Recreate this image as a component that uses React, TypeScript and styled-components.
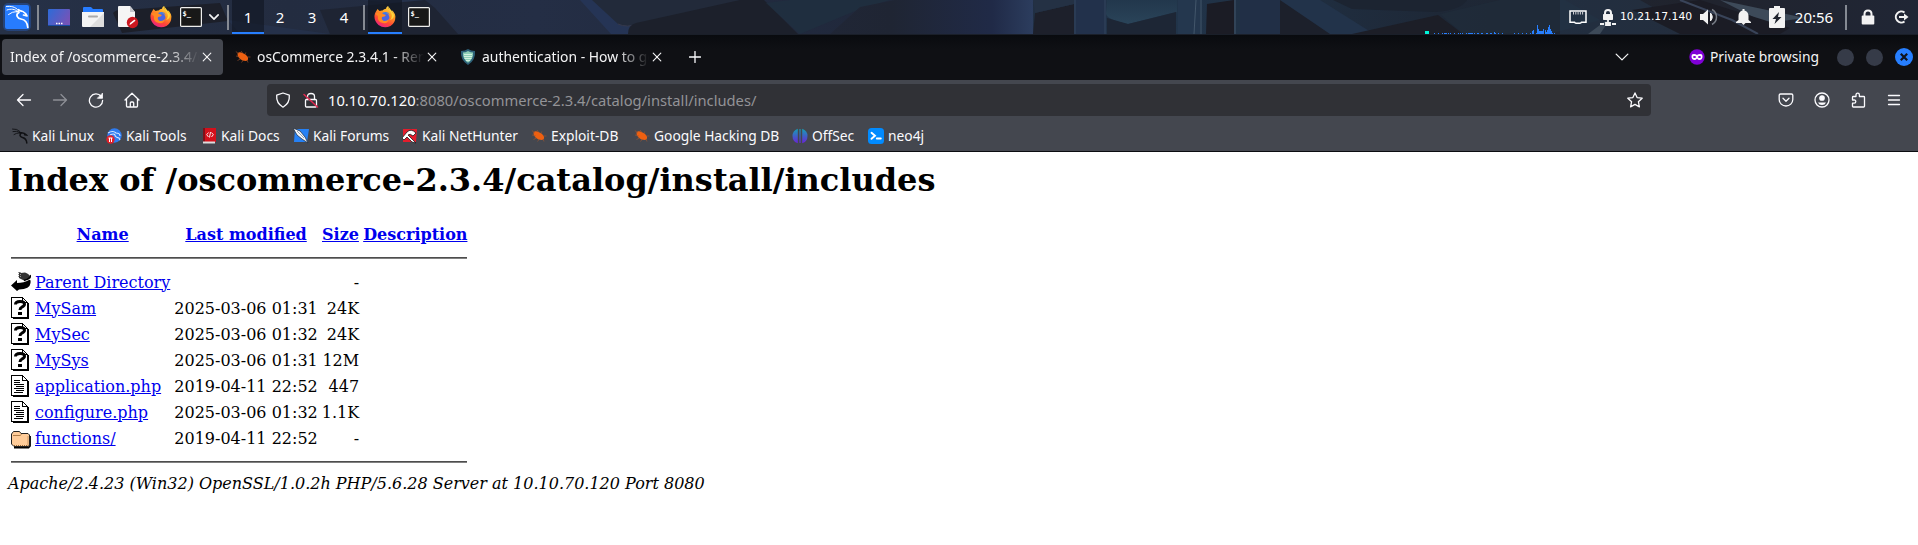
import React from 'react';
import styled, { createGlobalStyle, css } from 'styled-components';

const Global = createGlobalStyle`
  html, body { margin: 0; padding: 0; background: #fff; }
  *, *::before, *::after { box-sizing: border-box; }
  svg { display: block; flex: none; }
`;

const ui = '"Noto Sans", "Open Sans", sans-serif';

const Screen = styled.div`
  width: 1918px;
  height: 545px;
  overflow: hidden;
  display: flex;
  flex-direction: column;
  background: #fff;
`;

/* ---------- desktop panel ---------- */
const Panel = styled.header`
  position: relative;
  height: 35px;
  flex: none;
  background: #20283a;
  border-bottom: 1px solid #1a1f29;
  font-family: ${ui};
  color: #fff;
`;
const Wallpaper = styled.svg`
  position: absolute;
  inset: 0;
`;
const PanelItems = styled.div`
  position: relative;
  display: flex;
  align-items: center;
  height: 34px;
`;
const Slot = styled.div<{ $w: number; $active?: boolean }>`
  width: ${p => p.$w}px;
  height: 34px;
  flex: none;
  display: flex;
  align-items: center;
  justify-content: center;
  font-size: 15px;
  line-height: 34px;
  white-space: nowrap;
  ${p => p.$active && css`background: rgba(17, 23, 35, 0.65); box-shadow: inset 0 -2px 0 #277fff;`}
`;
const Gap = styled.div<{ $w: number }>`
  width: ${p => p.$w}px;
  flex: none;
`;
const Divider = styled.div`
  width: 2px;
  height: 25px;
  flex: none;
  background: #858a93;
`;
const Spacer = styled.div`
  flex: 1;
`;
const Graph = styled.svg`
  align-self: flex-end;
`;
const Address = styled.span`
  width: 80px;
  font-size: 10.8px;
  font-family: "DejaVu Sans", sans-serif;
  line-height: 32px;
  white-space: nowrap;
`;

/* ---------- browser tabs ---------- */
const TabStrip = styled.div`
  height: 45px;
  flex: none;
  display: flex;
  align-items: center;
  padding: 0 5px 1px 2px;
  background: linear-gradient(#090b0f, #0f1014 14px);
  color: #f4f4f5;
  font-family: ${ui};
`;
const Tab = styled.div<{ $active?: boolean; $w: number }>`
  display: flex;
  align-items: center;
  width: ${p => p.$w}px;
  height: 36px;
  padding: 0 8px 0 8px;
  border-radius: 4px;
  background: ${p => (p.$active ? '#44474f' : 'transparent')};
`;
const Favicon = styled.span`
  padding: 0 6px 0 4px;
`;
const Title = styled.span`
  flex: 1;
  overflow: hidden;
  white-space: nowrap;
  font-size: 13.9px;
  line-height: 34px;
  mask-image: linear-gradient(to left, transparent, #000 32px);
`;
const NewTab = styled.div`
  width: 44px;
  display: flex;
  justify-content: center;
`;
const Private = styled.div`
  display: flex;
  align-items: center;
  gap: 5px;
  margin: 0 18px 0 60px;
  font-size: 13.85px;
  line-height: 34px;
  white-space: nowrap;
`;
const WindowButtons = styled.div`
  display: flex;
  align-items: center;
  gap: 12px;
`;
const Dot = styled.i`
  width: 17px;
  height: 17px;
  border-radius: 50%;
  background: #363b48;
`;

/* ---------- navigation ---------- */
const NavBar = styled.div`
  display: flex;
  height: 36px;
  flex: none;
  padding-top: 4px;
  background: #44474f;
  color: #fbfbfe;
  font-family: ${ui};
`;
const NavButton = styled.div<{ $dim?: boolean }>`
  width: 36px;
  height: 32px;
  display: flex;
  align-items: center;
  justify-content: center;
  opacity: ${p => (p.$dim ? 0.4 : 1)};
`;
const NavGroup = styled.div<{ $left: number }>`
  display: flex;
  margin-left: ${p => p.$left}px;
`;
const UrlField = styled.div`
  display: flex;
  align-items: center;
  width: 1384px;
  height: 32px;
  margin-left: 117px;
  padding: 0 8px;
  border-radius: 4px;
  background: #303136;
`;
const Url = styled.span`
  flex: 1;
  margin-left: 9px;
  font-size: 14.72px;
  line-height: 32px;
  color: #939397;
  b { font-weight: 400; color: #fbfbfe; }
`;
const Bookmarks = styled.div`
  display: flex;
  height: 36px;
  flex: none;
  padding: 5px 0 0 12px;
  align-items: center;
  background: #44474f;
  border-bottom: 1px solid #0b0c10;
  color: #fbfbfe;
  font-family: ${ui};
`;
const Bookmark = styled.div<{ $w: number }>`
  display: flex;
  align-items: center;
  width: ${p => p.$w}px;
  flex: none;
  gap: 4px;
  font-size: 13.8px;
  line-height: 28px;
  white-space: nowrap;
`;

/* ---------- directory listing ---------- */
const Page = styled.main`
  padding: 10px 8px 0;
  font-family: "DejaVu Serif", serif;
  font-size: 16px;
  color: #000;
`;
const Heading = styled.h1`
  margin: 0 0 21px;
  font-size: 32px;
  line-height: 37px;
  font-weight: 700;
`;
const Listing = styled.table`
  border-spacing: 2px;
  line-height: 19px;
  td, th { padding: 1px; white-space: nowrap; height: 24px; }
`;
const IconCell = styled.td`
  width: 22px;
  vertical-align: top;
`;
const Right = styled.td`
  text-align: right;
`;
const RuleCell = styled.td`
  && { height: 20px; line-height: 0; }
`;
const Rule = styled.hr`
  margin: 8px 0;
  height: 2px;
  border: 0;
  border-top: 1px solid #4d4d4d;
  border-bottom: 1px solid #808080;
`;
const Link = styled.a`
  color: #0000ee;
  text-decoration: underline;
`;
const Signature = styled.address`
  line-height: 19px;
  font-style: italic;
  white-space: nowrap;
`;

/* ---------- drawings ---------- */
const KaliMenu = () => (
  <svg width="34" height="34" viewBox="0 0 34 34">
    <rect x="3" y="3" width="28" height="28" rx="5" fill="#2777ff" opacity=".28" />
    <rect x="5" y="5" width="24" height="24" rx="2" fill="#277cff" />
    <g transform="translate(5 4)" fill="none" stroke="#fff" strokeLinecap="round" strokeLinejoin="round">
      <path d="M1.500 2.500C6 2 10 2.500 13.500 6.500M2 6C6 4.500 10 5 12.500 7.500M3.500 10.500Q7 7.500 12 7.500" strokeWidth="1" />
      <path d="M12 7.500C15 6 18.500 7.500 20.500 9.500L22 12L18.500 11M14 8.500C10 10.500 12.500 14.500 16 15C20.500 15.800 22.500 18 22.800 23.500" strokeWidth="1.700" />
      <path d="M13.500 5.500L17 7.500" strokeWidth="1.300" />
    </g>
  </svg>
);
const Desktop = () => (
  <svg width="22" height="17" viewBox="0 0 22 17">
    <defs><linearGradient id="dk" x2="1" y2=".5"><stop stopColor="#2c6bd8" /><stop offset="1" stopColor="#7454b8" /></linearGradient></defs>
    <rect width="22" height="17" rx="1" fill="url(#dk)" />
    <path d="M0 16.500h22" stroke="#174aa0" />
    <path d="M8 14.500h1.500m1 0h1.500m1 0h1.500" stroke="#fff" strokeWidth="1.500" />
  </svg>
);
const Files = () => (
  <svg width="22" height="20" viewBox="0 0 22 20">
    <path d="M1 1q0-1 1-1h7l2 2h9q1 0 1 1v4H1z" fill="#277cff" />
    <path d="M0 5h22v14q0 1-1 1H1q-1 0-1-1z" fill="#f4f4f4" />
    <path d="M22 6v13q0 1-1 1H8z" fill="#dedede" />
    <path d="M7 9.500h8" stroke="#aaa" strokeWidth="2" strokeLinecap="round" />
  </svg>
);
const TextEditor = () => (
  <svg width="22" height="24" viewBox="0 0 22 24">
    <path d="M2 1h11l5 6v14q0 1-1 1H2q-1 0-1-1V2q0-1 1-1z" fill="#f5f5f5" />
    <path d="M13 1l5 6h-5z" fill="#c4c6cc" />
    <circle cx="15.500" cy="17.500" r="5.700" fill="#cc1820" />
    <path d="M12.500 20l.5-2 4.500-3.500 1 1.200-4.500 3.500z" fill="#fff" />
  </svg>
);
const Firefox = ({ id }: { id: string }) => (
  <svg width="22" height="22" viewBox="0 0 22 22">
    <defs>
      <linearGradient id={id} x1=".8" y1="0" x2=".3" y2="1"><stop stopColor="#ffe14a" /><stop offset=".38" stopColor="#ff9a22" /><stop offset=".72" stopColor="#ff4735" /><stop offset="1" stopColor="#e9208b" /></linearGradient>
    </defs>
    <path d="M3.500 3l2 2q1.500-.7 3-.5Q10 3 12 2.800Q12 1 14 0Q14 3 17 5l1.500 2q-.5-2-1-3Q21 6.500 21.400 10.500Q21.500 17 16.500 20Q10 23 4.500 19Q0 15 .5 9.500Q.8 7 2 5.500Q2.800 4 3.500 3z" fill={`url(#${id})`} />
    <circle cx="10.800" cy="11.500" r="4.600" fill="#4a66e4" />
    <path d="M8 7Q14 4.500 16 9Q13 6.500 11 8.500z" fill="#397bf0" />
    <path d="M1.500 8Q4 5.500 9 8l3 1q-1 2-4 2Q7 13 9 14.500Q12 16 15 13Q14 18 9 17Q3 16 4 10z" fill="#ff8a22" />
    <path d="M14 0Q14 3 17 6.500Q19 11 16 14Q20 13 20 9Q18 5 14 0z" fill="#ffd43b" />
  </svg>
);
const TermText = styled.text`
  font: bold 7px "DejaVu Sans Mono", monospace;
  fill: #fff;
`;
const Terminal = () => (
  <svg width="22" height="20" viewBox="0 0 22 20">
    <rect x=".6" y=".6" width="20.800" height="18.800" rx="1" fill="#181818" stroke="#eeeeec" strokeWidth="1.200" />
    <TermText x="2.500" y="9">$_</TermText>
  </svg>
);
const ChevronDown = ({ w = 12, s = 1.4 }: { w?: number; s?: number }) => (
  <svg width={w} height={w} viewBox="0 0 12 12"><path d="M1 3.500L6 8.500L11 3.500" fill="none" stroke="#f4f4f5" strokeWidth={s} strokeLinecap="round" strokeLinejoin="round" /></svg>
);
const Ethernet = () => (
  <svg width="18" height="14" viewBox="0 0 18 14">
    <path d="M1 1h16v11.200h-4.500q-.5 1-1.500 1H7q-1 0-1.500-1H1z" fill="none" stroke="#fff" strokeWidth="1.500" />
    <path d="M4.500 2v2.500m2.300-2.500v2.500m2.300-2.500v2.500m2.300-2.500v2.500m2.200-2.500v2.500" stroke="#d0d0d4" />
  </svg>
);
const VpnLock = () => (
  <svg width="16" height="17" viewBox="0 0 16 17">
    <path d="M5 6V4q0-3 3-3t3 3v2" fill="none" stroke="#f2f2f2" strokeWidth="2" />
    <rect x="3" y="5" width="10" height="6" rx=".7" fill="#f2f2f2" />
    <path d="M8 11v2M6 14h4v2H6zM0 15h4m8 0h4" stroke="#f2f2f2" strokeWidth="1.800" fill="#f2f2f2" />
  </svg>
);
const Speaker = () => (
  <svg width="18" height="18" viewBox="0 0 18 18">
    <path d="M0 6h3l5-4.500v15L3 12H0z" fill="#f2f2f2" />
    <path d="M10.500 5q3.500 4 0 8z" fill="#f2f2f2" stroke="#f2f2f2" />
    <path d="M12 1.500Q16.500 4 16.500 9t-4.500 7.500" fill="none" stroke="#777c86" strokeWidth="1.500" />
  </svg>
);
const Bell = () => (
  <svg width="15" height="16" viewBox="0 0 15 16"><path d="M6.500 0h2v1.500Q12.500 2.500 12.500 7v4L15 13v1H0v-1l2.500-2V7q0-4.500 4-5.500zM5.500 14h4l-2 2z" fill="#f2f2f2" /></svg>
);
const Battery = () => (
  <svg width="16" height="22" viewBox="0 0 16 22"><path d="M5 0h6v2h4q1 0 1 1v18q0 1-1 1H1q-1 0-1-1V3q0-1 1-1h4z" fill="#f2f2f2" /><path d="M10 6L3.500 13H7l-1.500 5L12.500 11H9z" fill="#20242e" /></svg>
);
const Padlock = () => (
  <svg width="14" height="16" viewBox="0 0 14 16"><path d="M3.500 7V5q0-3.500 3.500-3.500T10.500 5v2" fill="none" stroke="#f2f2f2" strokeWidth="2" /><rect x=".7" y="6.500" width="12.600" height="9" rx="1" fill="#f2f2f2" /></svg>
);
const Logout = () => (
  <svg width="15" height="14" viewBox="0 0 15 14"><path d="M10.500 2.500A5.500 5.500 0 1 0 10.500 11.500M5 7h6" fill="none" stroke="#f2f2f2" strokeWidth="2" /><path d="M10 3.500L14.500 7L10 10.500z" fill="#f2f2f2" /></svg>
);
const Cross = () => (
  <svg width="16" height="16" viewBox="0 0 16 16"><path d="M4.200 4.200l7.600 7.600m0-7.600l-7.600 7.600" stroke="#f4f4f5" strokeWidth="1.150" strokeLinecap="round" /></svg>
);
const Plus = () => (
  <svg width="12" height="12" viewBox="0 0 12 12"><path d="M6 .5v11M.5 6h11" stroke="#fbfbfe" strokeWidth="1.300" strokeLinecap="round" /></svg>
);
const Bug = () => (
  <svg width="16" height="16" viewBox="0 0 16 16">
    <path d="M2.500 4.500Q4 2.500 7.500 4Q11.500 5.200 13 8.500Q13.500 11.500 11 12Q7 12 4.500 9.500Q2 7 2.500 4.500z" fill="#ee6011" />
    <path d="M.8 2.500L4 5M6 2l2 2.500M1 7l4 1M2.500 11.500l3-1.500M6.500 13.500l1.500-2M10 5l.8-1.500M12 8h3.500M12 11l1 2.500" stroke="#a8562c" strokeWidth=".6" fill="none" />
  </svg>
);
const Shield = () => (
  <svg width="16" height="16" viewBox="0 0 16 16">
    <path d="M8 0Q11 2 15 2Q16 11 8 16Q0 11 1 2Q5 2 8 0z" fill="#2d6078" />
    <path d="M8 2Q10.500 3.500 13 3.500Q13.500 10 8 13.800Q2.500 10 3 3.500Q5.500 3.500 8 2z" fill="#8fd0b8" />
    <path d="M4 5.500h8M4 7.500h8M4.500 9.500h7M6 11.500h4" stroke="#d9f4e3" strokeWidth=".9" />
  </svg>
);
const Mask = () => (
  <svg width="16" height="16" viewBox="0 0 16 16"><circle cx="8" cy="8" r="7.700" fill="#8000d7" /><path d="M8 6Q10 4.500 12.500 5.200Q13.500 5.500 13.500 8Q13 11 10.500 11Q9 11 8 9.500Q7 11 5.500 11Q3 11 2.500 8Q2.500 5.500 3.500 5.200Q6 4.500 8 6z" fill="#fff" /><ellipse cx="5.500" cy="8" rx="1.500" ry="1" fill="#8000d7" /><ellipse cx="10.500" cy="8" rx="1.500" ry="1" fill="#8000d7" /></svg>
);
const CloseDot = () => (
  <svg width="18" height="18" viewBox="0 0 18 18"><circle cx="9" cy="9" r="9" fill="#277fff" /><path d="M5.800 5.800l6.400 6.400m0-6.400l-6.400 6.400" stroke="#10131c" strokeWidth="2.200" /></svg>
);

const line = { fill: 'none', stroke: 'currentColor', strokeWidth: 1.3, strokeLinecap: 'round' as const, strokeLinejoin: 'round' as const };
const Icon16 = ({ children }: { children: React.ReactNode }) => (
  <svg width="16" height="16" viewBox="0 0 16 16" {...line}>{children}</svg>
);
const Back = () => <Icon16><path d="M1.500 8h13M7 2.500L1.500 8L7 13.500" /></Icon16>;
const Forward = () => <Icon16><path d="M1.500 8h13M9 2.500L14.500 8L9 13.500" /></Icon16>;
const Reload = () => <Icon16><path d="M13.200 4.500A6.600 6.600 0 1 0 14.600 8.500" /><path d="M14.500 1.500v4.800H9.700z" fill="currentColor" strokeWidth=".8" /></Icon16>;
const Home = () => <Icon16><path d="M1 8L8 1.200L15 8M2.500 7v7q0 1 1 1h9q1 0 1-1V7M6.300 15v-4q0-1 1-1h1.400q1 0 1 1v4" /></Icon16>;
const Tracking = () => <Icon16><path d="M8 1L14.300 3.200Q15 11 8 15.200Q1 11 1.700 3.200z" /></Icon16>;
const Insecure = () => <Icon16><path d="M4.500 7.500V4.500q0-3 3.500-3t3.500 3v3" /><rect x="2.500" y="7.500" width="11" height="7.500" rx="1" /><path d="M1 2.500l13.500 12.500" stroke="#e22850" strokeWidth="1.500" /></Icon16>;
const Star = () => <Icon16><path d="M8 .9l2.100 4.700 5.100.6-3.800 3.500 1 5.200L8 12.400l-4.400 2.500 1-5.200L.8 6.200l5.100-.6z" /></Icon16>;
const Pocket = () => <Icon16><path d="M2.500 2h11q1.300 0 1.300 1.300V7.500a6.800 6.500 0 0 1-13.600 0V3.300Q1.200 2 2.500 2zM5 6.300l3 2.900 3-2.900" /></Icon16>;
const Account = () => <Icon16><circle cx="8" cy="8" r="7" /><circle cx="8" cy="6" r="2.200" fill="currentColor" /><path d="M4 10.500h8Q11 13 8 13T4 10.500z" fill="currentColor" stroke="none" /></Icon16>;
const Puzzle = () => <Icon16><path d="M6 4.500V3q0-1.800 1.700-1.800T9.400 3v1.500h4.300q.8 0 .8.800v8.900q0 .8-.8.800H3.300q-.8 0-.8-.8v-3h1.700q1.600 0 1.600-1.600T4.200 8H2.500V5.300q0-.8.8-.8z" /></Icon16>;
const Menu = () => <svg width="14" height="16" viewBox="0 0 14 16" {...line}><path d="M1.500 3.500h11M1.500 8h11M1.500 12.500h11" /></svg>;

const BmKali = () => (
  <svg width="16" height="16" viewBox="0 0 16 16" fill="none" stroke="#101114" strokeLinecap="round"><path d="M.5 1Q5 .5 8 3.500M1 3.500Q5 2.500 8 4.500M2 6.500Q4 5 8 4.800" strokeWidth=".9" /><path d="M8 4.800Q12 4 14.500 7L12.500 6.800M9 5.300Q6.500 8 10.500 9.500Q14.500 10.500 14.800 15" strokeWidth="1.500" /></svg>
);
const BmTools = () => (
  <svg width="16" height="16" viewBox="0 0 16 16"><circle cx="8.500" cy="7.500" r="7.200" fill="#2f7cf0" /><path d="M2 5Q7 2 10 5Q14 5 14 8M4 7Q8 5 9 7Q9 9 13 10L14 12" fill="none" stroke="#d8e7ff" strokeWidth="1.100" /><circle cx="4.500" cy="11.500" r="4.200" fill="#e02029" /><path d="M2.500 10h4M3.500 10v4M5.500 10v4" stroke="#fff" strokeWidth="1" /></svg>
);
const BmDocs = () => (
  <svg width="14" height="16" viewBox="0 0 14 16"><path d="M0 0h13v14H0z" fill="#d4101b" /><path d="M0 0h2v14H0z" fill="#7e1119" /><path d="M0 13.500h12v2H0z" fill="#ddd" /><path d="M5.500 4.500L3.700 6.700L5.500 9m3-4.500l1.800 2.200L8.500 9M7.500 4l-1 5.500" fill="none" stroke="#fff" strokeWidth=".9" /></svg>
);
const BmForums = () => (
  <svg width="16" height="16" viewBox="0 0 16 16"><path d="M2 1h14l-2 13H1z" fill="#2681f5" /><path d="M0 0l7 3 5 6 3 6-6-4-5-4z" fill="#f3f6fa" stroke="#1a263a" strokeWidth=".7" /><path d="M4 3l7 7" stroke="#7f8fa5" strokeWidth=".8" /></svg>
);
const BmHunter = () => (
  <svg width="16" height="16" viewBox="0 0 16 16"><path d="M1 1h14l-1 13H1z" fill="#e41d2c" /><path d="M0 10L5 4Q9 0 14 5L11 8Q8 5 6 7L14 15L10 14L5 9L2 12z" fill="#fff" stroke="#1a1a1e" strokeWidth=".8" /></svg>
);
const BmOffsec = () => (
  <svg width="16" height="16" viewBox="0 0 16 16"><defs><linearGradient id="os" x2="0" y2="1"><stop stopColor="#13a0b5" /><stop offset="1" stopColor="#6a22d8" /></linearGradient></defs><path d="M5.800.7v14.600Q.5 13.500.5 8T5.800.7zM10.200.7v14.600Q15.500 13.500 15.500 8T10.200.7zM7.400 1h1.200v14H7.400z" fill="url(#os)" /></svg>
);
const BmNeo = () => (
  <svg width="16" height="16" viewBox="0 0 16 16"><rect width="16" height="16" rx="3.500" fill="#018bff" /><path d="M3.500 4.800L7 7.800L3.500 10.800M8.800 10.500h4" fill="none" stroke="#fff" strokeWidth="1.900" strokeLinecap="round" /></svg>
);

const BackIcon = () => (
  <svg width="20" height="22" viewBox="0 0 20 22"><path d="M0 14.500L6 9v3Q13 12 18 9Q20 8 19.500 12Q19 18 8 18.500L6 20z" fill="#000" /><path d="M8 1L10 2L14 1.500Q19 3 20 7Q17 9 13 9.500L8 7z" fill="#333" /><path d="M7 1.500h3M7 3.500h3M7 5.500h3" stroke="#999" strokeDasharray="1 1" /><path d="M13 9.500Q19 8 20 4" stroke="#000" strokeWidth="1.300" fill="none" /></svg>
);
const Sheet = ({ children }: { children: React.ReactNode }) => (
  <svg width="20" height="22" viewBox="0 0 20 22" shapeRendering="crispEdges">
    <path d="M2 22h16V6h-1v14H2z" fill="#000" />
    <path d="M.5.500h11l5 5v15H.5z" fill="#fff" stroke="#000" />
    <path d="M11.500.500v5h5" fill="none" stroke="#000" />
    {children}
  </svg>
);
const Unknown = () => (
  <Sheet><path d="M4.500 7.500Q4.500 4.500 9 4.500T13.500 7Q13.500 9 11 10Q9 11 9 13" fill="none" stroke="#000" strokeWidth="3" shapeRendering="auto" /><path d="M7 15h4v3H7z" fill="#000" /></Sheet>
);
const TextFile = () => (
  <Sheet><path d="M3 5.500h6M3 7.500h6M3 9.500h10M5 11.500h8M3 13.500h10M5 15.500h8M3 17.500h9" stroke="#000" /></Sheet>
);
const Folder = () => (
  <svg width="20" height="22" viewBox="0 0 20 22"><path d="M3 20.500h14.500l1.500-1.500V9" fill="none" stroke="#000" strokeWidth="1.800" /><path d="M.5 7L2.500 4.500h6L10 6.500h7L18.500 8v10L17 19.500H3L.5 17z" fill="#ffcc99" stroke="#222" /><path d="M2 8.500h7l1.500-1" stroke="#996633" strokeWidth=".8" fill="none" /><path d="M3 18.500h14V9" fill="none" stroke="#996633" strokeDasharray="1 1" /></svg>
);

const PanelArt = () => (
  <Wallpaper width="1918" height="34" viewBox="0 0 1918 34">
    <defs>
      <linearGradient id="bg"><stop stopColor="#263147" /><stop offset=".15" stopColor="#232c40" /><stop offset=".28" stopColor="#242e45" /><stop offset=".46" stopColor="#20283b" /><stop offset=".6" stopColor="#21354b" /><stop offset=".75" stopColor="#1e2837" /><stop offset=".88" stopColor="#20232d" /><stop offset="1" stopColor="#202635" /></linearGradient>
      <linearGradient id="pl" x2="1"><stop stopColor="#202636" /><stop offset=".3" stopColor="#1f2533" /><stop offset=".8" stopColor="#202a47" /><stop offset="1" stopColor="#2c3d5e" /></linearGradient>
      <linearGradient id="gl" x2="0" y2="1"><stop stopColor="#22374c" /><stop offset="1" stopColor="#2a4459" /></linearGradient>
    </defs>
    <rect width="1918" height="34" fill="url(#bg)" />
    <path d="M113 13Q117 9 124 10L220 3L228 21L122 33z" fill="#1c1f29" />
    <path d="M225 0h200v6L360 0zM228 20L330 34H240z" fill="#26334e" opacity=".7" />
    <path d="M425 0L435 8L458 34H330L320 10z" fill="#1e2433" />
    <path d="M580 0h38l22 34h-29z" fill="#27375d" opacity=".7" />
    <path d="M592 0h160L640 24Q626 28 618 24z" fill="#222a3a" />
    <path d="M618 24Q626 28 640 24L752 0" stroke="#35394c" fill="none" />
    <path d="M628 34Q628 25 636 23L740 0h24l34 34z" fill="#1c202b" />
    <path d="M766 3L790 0h100l-30 9L800 34z" fill="#203040" opacity=".7" />
    <path d="M860 7L895 0h138v34H830z" fill="url(#pl)" />
    <path d="M1035 13L1074 4V34H1033z" fill="#1d202b" />
    <path d="M1033 0h41v4l-39 9z" fill="#243144" />
    <path d="M1074 0h32v34h-32z" fill="#22314b" /><path d="M1075 0v34M1105 0v34" stroke="#33475f" />
    <path d="M1107 0h70v12l-49 12Q1108 20 1106 14z" fill="url(#gl)" />
    <path d="M1107 18L1128 24L1176 12V34h-69z" fill="#1d2635" />
    <path d="M1178 0h22v34h-22z" fill="#24374e" /><path d="M1196 0l-2 34M1201 0v34M1235 0v34" stroke="#43576b" />
    <path d="M1207 4L1234 0V34h-28z" fill="#1b1c25" />
    <path d="M1240 0h50l40 34h-90z" fill="#212f46" />
    <path d="M1280 0h40l54 34h-94V8z" fill="#22334a" />
    <path d="M1280 0L1330 34h-50z" fill="#1c202b" />
    <path d="M1333 0h134q-6 10-32 12L1352 9z" fill="#1c2431" />
    <path d="M1352 34L1438 15L1463 34z" fill="#1c1e27" />
    <path d="M1440 14L1500 0h65l35 20-50 14h-87z" fill="#202c3a" opacity=".7" />
    <path d="M1560 0h80l60 34h-140z" fill="#26384d" opacity=".5" />
    <path d="M1588 34L1612 16L1600 34zM1720 0l85 18-40 5z" fill="#3d4a59" />
    <path d="M1632 10L1700 0l90 28-10 6h-100z" fill="#1b1c25" />
    <path d="M1680 0l52 20 26 14" stroke="#394459" strokeWidth="2" fill="none" />
  </Wallpaper>
);

const blips = [9, 13, 17, 19, 20, 21, 23, 25, 29, 33, 35, 37, 41, 43, 44, 45, 46, 47, 49, 52, 53, 56, 57, 61, 62, 65, 66, 70, 73, 77, 89, 93, 97, 101, 105, 129];
const peaks: [number, number][] = [[69, 2], [107, 3], [108, 4], [111, 1], [112, 9], [113, 5], [114, 3], [115, 3], [116, 3], [117, 3], [118, 5], [120, 4], [121, 2], [122, 4], [123, 7], [124, 9], [125, 5], [126, 3], [127, 1]];
const NetGraph = () => (
  <Graph width="140" height="12" viewBox="0 0 140 12" shapeRendering="crispEdges">
    <rect y="9" width="4" height="3" fill="#00f5d8" />
    {blips.map(x => <rect key={x} x={x} y="11" width="1" height="1" fill="#277fff" />)}
    {peaks.map(([x, h]) => <rect key={x} x={x} y={12 - h} width="1" height={h} fill="#277fff" />)}
  </Graph>
);
const GraphSlot = styled.div`
  display: flex;
  width: 144px;
  height: 34px;
`;

const bookmarks: [string, React.ReactNode, number][] = [
  ['Kali Linux', <BmKali />, 94],
  ['Kali Tools', <BmTools />, 97],
  ['Kali Docs', <BmDocs />, 90],
  ['Kali Forums', <BmForums />, 109],
  ['Kali NetHunter', <BmHunter />, 129],
  ['Exploit-DB', <Bug />, 103],
  ['Google Hacking DB', <Bug />, 158],
  ['OffSec', <BmOffsec />, 76],
  ['neo4j', <BmNeo />, 80],
];
const files: [string, React.ReactNode, string, string][] = [
  ['Parent Directory', <BackIcon />, '', '-'],
  ['MySam', <Unknown />, '2025-03-06 01:31', '24K'],
  ['MySec', <Unknown />, '2025-03-06 01:32', '24K'],
  ['MySys', <Unknown />, '2025-03-06 01:31', '12M'],
  ['application.php', <TextFile />, '2019-04-11 22:52', '447'],
  ['configure.php', <TextFile />, '2025-03-06 01:32', '1.1K'],
  ['functions/', <Folder />, '2019-04-11 22:52', '-'],
];

export default function App() {
  return (
    <Screen>
      <Global />
      <Panel>
        <PanelArt />
        <PanelItems>
          <Slot $w={34}><KaliMenu /></Slot>
          <Gap $w={3} />
          <Divider />
          <Slot $w={40}><Desktop /></Slot>
          <Slot $w={28}><Files /></Slot>
          <Slot $w={42}><TextEditor /></Slot>
          <Slot $w={24}><Firefox id="fx1" /></Slot>
          <Slot $w={36}><Terminal /></Slot>
          <Slot $w={10}><ChevronDown w={10} s={2} /></Slot>
          <Gap $w={8} />
          <Divider />
          <Gap $w={3} />
          <Slot $w={32} $active>1</Slot>
          <Slot $w={32}>2</Slot>
          <Slot $w={32}>3</Slot>
          <Slot $w={32}>4</Slot>
          <Gap $w={3} />
          <Divider />
          <Gap $w={3} />
          <Slot $w={34} $active><Firefox id="fx2" /></Slot>
          <Slot $w={34}><Terminal /></Slot>
          <Spacer />
          <GraphSlot><NetGraph /></GraphSlot>
          <Slot $w={18}><Ethernet /></Slot>
          <Gap $w={13} />
          <Slot $w={16}><VpnLock /></Slot>
          <Gap $w={4} />
          <Address>10.21.17.140</Address>
          <Slot $w={18}><Speaker /></Slot>
          <Gap $w={18} />
          <Slot $w={15}><Bell /></Slot>
          <Gap $w={18} />
          <Slot $w={16}><Battery /></Slot>
          <Slot $w={58}>20:56</Slot>
          <Gap $w={2} />
          <Divider />
          <Slot $w={41}><Padlock /></Slot>
          <Slot $w={27}><Logout /></Slot>
          <Gap $w={3} />
        </PanelItems>
      </Panel>
      <TabStrip>
        <Tab $w={221} $active><Title>Index of /oscommerce-2.3.4/c</Title><Cross /></Tab>
        <Tab $w={225}><Favicon><Bug /></Favicon><Title>osCommerce 2.3.4.1 - Rem</Title><Cross /></Tab>
        <Tab $w={225}><Favicon><Shield /></Favicon><Title>authentication - How to ge</Title><Cross /></Tab>
        <NewTab><Plus /></NewTab>
        <Spacer />
        <ChevronDown w={14} s={1.1} />
        <Private><Mask />Private browsing</Private>
        <WindowButtons><Dot /><Dot /><CloseDot /></WindowButtons>
      </TabStrip>
      <NavBar>
        <NavGroup $left={6}>
          <NavButton><Back /></NavButton>
          <NavButton $dim><Forward /></NavButton>
          <NavButton><Reload /></NavButton>
          <NavButton><Home /></NavButton>
        </NavGroup>
        <UrlField>
          <Tracking />
          <Gap $w={12} />
          <Insecure />
          <Url><b>10.10.70.120</b>:8080/oscommerce-2.3.4/catalog/install/includes/</Url>
          <Star />
        </UrlField>
        <NavGroup $left={117}>
          <NavButton><Pocket /></NavButton>
          <NavButton><Account /></NavButton>
          <NavButton><Puzzle /></NavButton>
          <NavButton><Menu /></NavButton>
        </NavGroup>
      </NavBar>
      <Bookmarks>
        {bookmarks.map(([name, icon, w]) => <Bookmark key={name} $w={w}>{icon}<span>{name}</span></Bookmark>)}
      </Bookmarks>
      <Page>
        <Heading>Index of /oscommerce-2.3.4/catalog/install/includes</Heading>
        <Listing>
          <tbody>
            <tr><th /><th><Link>Name</Link></th><th><Link>Last modified</Link></th><th><Link>Size</Link></th><th><Link>Description</Link></th></tr>
            <tr><RuleCell colSpan={5}><Rule /></RuleCell></tr>
            {files.map(([name, icon, date, size]) => (
              <tr key={name}>
                <IconCell>{icon}</IconCell>
                <td><Link>{name}</Link></td>
                <Right>{date}</Right>
                <Right>{size}</Right>
                <td />
              </tr>
            ))}
            <tr><RuleCell colSpan={5}><Rule /></RuleCell></tr>
          </tbody>
        </Listing>
        <Signature>Apache/2.4.23 (Win32) OpenSSL/1.0.2h PHP/5.6.28 Server at 10.10.70.120 Port 8080</Signature>
      </Page>
    </Screen>
  );
}
